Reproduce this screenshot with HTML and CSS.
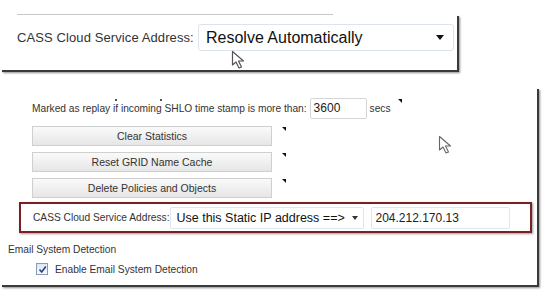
FILE: index.html
```html
<!DOCTYPE html>
<html>
<head>
<meta charset="utf-8">
<link rel="stylesheet" href="styles.css">
</head>
<body>
<div class="page">
  <div class="shot-top">
    <div class="sep"></div>
    <div class="top-row">
      <span class="top-label">CASS Cloud Service Address:</span>
      <div class="big-select">
        <span>Resolve Automatically</span>
        <span class="caret big-caret"></span>
      </div>
    </div>
    <svg class="cursor cursor-a" width="18" height="20" viewBox="0 0 18 20"><path d="M1.5 1.5 L1.5 15 L5 12 L8 18 L10.5 17 L7.5 11 L12.5 11 Z" fill="#fff" stroke="#555" stroke-width="1.2" stroke-linejoin="round"/></svg>
  </div>

  <div class="shot-bottom">
    <div class="cut-row"><span class="dot d1"></span><span class="dot d2"></span></div>
    <div class="row replay-row">
      <span class="txt">Marked as replay if incoming SHLO time stamp is more than:</span>
      <div class="num-input">3600</div>
      <span class="txt secs">secs</span>
      <span class="tick"></span>
    </div>
    <div class="btn-row"><div class="btn">Clear Statistics</div><span class="tick"></span></div>
    <div class="btn-row"><div class="btn">Reset GRID Name Cache</div><span class="tick"></span></div>
    <div class="btn-row"><div class="btn">Delete Policies and Objects</div><span class="tick"></span></div>
    <div class="red-box">
      <span class="txt">CASS Cloud Service Address:</span>
      <div class="sm-select"><span>Use this Static IP address ==&gt;</span><span class="caret sm-caret"></span></div>
      <div class="ip-input">204.212.170.13</div>
    </div>
    <div class="section-title">Email System Detection</div>
    <div class="check-row">
      <span class="checkbox"><svg width="9" height="9" viewBox="0 0 9 9"><path d="M1.5 4.5 L3.7 7 L7.8 1.5" fill="none" stroke="#2a3f8c" stroke-width="1.6"/></svg></span>
      <span class="txt">Enable Email System Detection</span>
    </div>
    <svg class="cursor cursor-b" width="16" height="20" viewBox="0 0 16 20"><path d="M1.5 1.5 L1.5 15 L5 12 L8 18 L10.5 17 L7.5 11 L12.5 11 Z" fill="#fff" stroke="#666" stroke-width="1.1" stroke-linejoin="round"/></svg>
  </div>
</div>
</body>
</html>
```

FILE: styles.css
```css
html, body {
  margin: 0;
  padding: 0;
  background: #fff;
}
body {
  width: 547px;
  height: 297px;
  overflow: hidden;
  font-family: "Liberation Sans", Arial, sans-serif;
  color: #333;
}
.page {
  display: flex;
  flex-direction: column;
}
.shot-top {
  position: relative;
  margin-top: 14px;
  width: 457px;
  height: 56px;
  background: #fff;
  box-shadow: 2px 2px 0 #3a3a3a, 3px 3px 2px rgba(0,0,0,0.45);
}
.sep {
  margin-left: 17px;
  width: 316px;
  height: 1px;
  background: #c8c8c8;
}
.top-row {
  display: flex;
  align-items: center;
  margin-top: 9px;
  margin-left: 17px;
}
.top-label {
  font-size: 13px;
  letter-spacing: 0.1px;
  color: #333;
  width: 181px;
}
.big-select {
  display: flex;
  align-items: center;
  justify-content: space-between;
  width: 238px;
  height: 25px;
  padding: 0 9px 0 7px;
  border: 1px solid #dde3ea;
  border-radius: 3px;
  font-size: 16px;
  color: #111;
}
.caret {
  width: 0;
  height: 0;
  border-left: 4px solid transparent;
  border-right: 4px solid transparent;
  border-top: 5px solid #111;
}
.sm-caret {
  border-left-width: 3px;
  border-right-width: 3px;
  border-top-width: 4px;
  border-top-color: #333;
}
.cursor {
  position: absolute;
}
.cursor-a { left: 231px; top: 36px; }
.cursor-b { left: 438px; top: 48px; }

.shot-bottom {
  position: relative;
  margin-top: 17px;
  width: 537px;
  height: 198px;
  background: #fff;
  box-shadow: 2px 2px 0 #3a3a3a, 3px 3px 2px rgba(0,0,0,0.45);
}
.cut-row {
  height: 4px;
  position: relative;
}
.dot {
  display: inline-block;
  width: 2px;
  height: 2px;
  background: #555;
  margin-top: 1px;
}
.d1 { margin-left: 115px; }
.d2 { margin-left: 43px; }
.txt {
  font-size: 10.2px;
  color: #333;
}
.row {
  display: flex;
  align-items: center;
}
.replay-row {
  margin-top: 7px;
  margin-left: 32px;
}
.num-input {
  margin-left: 3px;
  width: 52px;
  height: 19px;
  line-height: 19px;
  padding-left: 3px;
  border: 1px solid #d6d6d6;
  border-radius: 2px;
  font-size: 12px;
  color: #222;
}
.secs {
  margin-left: 3px;
}
.tick {
  align-self: flex-start;
  width: 0;
  height: 0;
  border-top: 4px solid #111;
  border-left: 4px solid transparent;
  margin-left: 7px;
  margin-top: 1px;
}
.btn-row {
  display: flex;
  margin-left: 32px;
  margin-top: 7px;
}
.btn-row + .btn-row { margin-top: 6px; }
.btn {
  width: 238px;
  height: 18px;
  line-height: 18px;
  text-align: center;
  font-size: 10.5px;
  color: #333;
  border: 1px solid #cfcfcf;
  background: linear-gradient(#fafafa, #e6e6e6);
}
.btn-row .tick { margin-left: 10px; }
.red-box {
  display: flex;
  align-items: center;
  margin-top: 4px;
  margin-left: 19px;
  width: 497px;
  height: 27px;
  padding-left: 12px;
  border: 2px solid #7a2024;
  box-shadow: 1px 1px 2px rgba(0,0,0,0.4);
}
.sm-select {
  display: flex;
  align-items: center;
  justify-content: space-between;
  margin-left: 1px;
  width: 182px;
  height: 20px;
  padding: 0 5px;
  border: 1px solid #e2e6ea;
  border-radius: 2px;
  font-size: 12.5px;
  color: #111;
}
.ip-input {
  margin-left: 7px;
  width: 134px;
  height: 20px;
  line-height: 20px;
  padding-left: 3px;
  border: 1px solid #e2e6ea;
  border-radius: 2px;
  font-size: 12px;
  color: #222;
}
.section-title {
  margin-top: 11px;
  margin-left: 8px;
  font-size: 10.2px;
  color: #333;
}
.check-row {
  display: flex;
  align-items: center;
  margin-top: 8px;
  margin-left: 36px;
}
.checkbox {
  display: flex;
  align-items: center;
  justify-content: center;
  width: 10px;
  height: 10px;
  border: 1px solid #8a9bb5;
  background: linear-gradient(#dfe7f3, #f7f9fc);
  margin-right: 7px;
}
```
